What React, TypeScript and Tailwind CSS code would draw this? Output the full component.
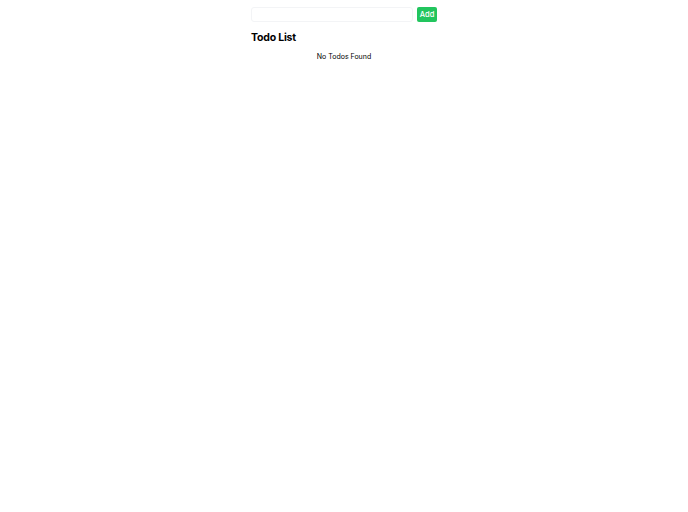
import { useState } from "react"

export default function App() {
  const [text, setText] = useState("")
  const [todos, setTodos] = useState<string[]>([])

  const addTodo = () => {
    if (!text.trim()) return
    setTodos([...todos, text.trim()])
    setText("")
  }

  return (
    <div className="min-h-screen bg-white" style={{ fontFamily: "Inter, 'Liberation Sans', sans-serif" }}>
      <div className="mx-auto w-[186px] pt-[7px]">
        <div className="flex items-center gap-1">
          <input
            type="text"
            value={text}
            onChange={(e) => setText(e.target.value)}
            className="h-[15px] flex-1 min-w-0 rounded-[3px] border border-gray-100 px-1 text-[7px] outline-none"
          />
          <button
            onClick={addTodo}
            className="flex h-[15px] w-[20px] items-center justify-center rounded-[2px] bg-[#22c55e] text-[7.5px] font-medium leading-none text-white"
          >
            Add
          </button>
        </div>
        <h1 className="mt-[8px] text-[10.5px] font-bold leading-[16px] tracking-[-0.2px] text-black">Todo List</h1>
        {todos.length === 0 ? (
          <p className="mt-[5px] text-center text-[7px] leading-[12px] text-black">No Todos Found</p>
        ) : (
          <ul className="mt-[5px]">
            {todos.map((t, i) => (
              <li key={i} className="text-[7px]">
                {t}
              </li>
            ))}
          </ul>
        )}
      </div>
    </div>
  )
}
